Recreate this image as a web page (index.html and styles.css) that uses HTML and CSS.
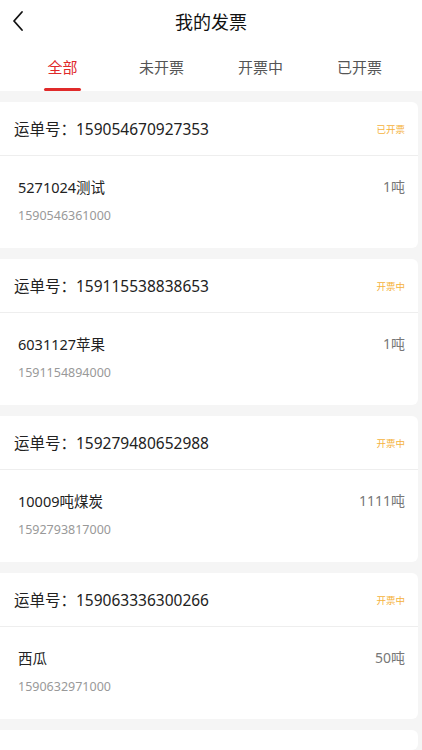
FILE: index.html
```html
<html><head>
<meta charset="utf-8">
<link rel="stylesheet" href="styles.css">
</head><body>
<div class="nav">
  <svg class="back" width="14" height="22" viewBox="0 0 14 22"><path d="M10 2 L2 11 L10 20" fill="none" stroke="#111" stroke-width="1.8" stroke-linecap="round" stroke-linejoin="round"/></svg>
  <div class="title">我的发票</div>
</div>
<div class="tabs">
  <div class="tab active">全部</div>
  <div class="tab">未开票</div>
  <div class="tab">开票中</div>
  <div class="tab">已开票</div>
</div>
<div class="list">
  <div class="card">
    <div class="card-head"><span class="no">运单号：159054670927353</span><span class="status">已开票</span></div>
    <div class="card-body">
      <div class="row"><span class="name">5271024测试</span><span class="weight">1吨</span></div>
      <div class="code">1590546361000</div>
    </div>
  </div>
  <div class="card">
    <div class="card-head"><span class="no">运单号：159115538838653</span><span class="status">开票中</span></div>
    <div class="card-body">
      <div class="row"><span class="name">6031127苹果</span><span class="weight">1吨</span></div>
      <div class="code">1591154894000</div>
    </div>
  </div>
  <div class="card">
    <div class="card-head"><span class="no">运单号：159279480652988</span><span class="status">开票中</span></div>
    <div class="card-body">
      <div class="row"><span class="name">10009吨煤炭</span><span class="weight">1111吨</span></div>
      <div class="code">1592793817000</div>
    </div>
  </div>
  <div class="card">
    <div class="card-head"><span class="no">运单号：159063336300266</span><span class="status">开票中</span></div>
    <div class="card-body">
      <div class="row"><span class="name">西瓜</span><span class="weight">50吨</span></div>
      <div class="code">1590632971000</div>
    </div>
  </div>
  <div class="card last"></div>
</div>
</body></html>
```

FILE: styles.css
```css
body {
    margin: 0;
    font-family: "Noto Sans", "Noto Sans CJK SC", sans-serif;
    background-color: #fff;
    color: #222;
    height: 750px;
    overflow: hidden;
}
.nav {
    height: 44px;
    display: flex;
    align-items: center;
    justify-content: center;
    position: relative;
}
.back {
    position: absolute;
    left: 12px;
    top: 10px;
}
.title {
    font-size: 18px;
    color: #111;
    margin-top: -2px;
}
.tabs {
    display: flex;
    padding: 0 13px;
    height: 47px;
}
.tab {
    flex: 1;
    text-align: center;
    font-size: 15px;
    color: #555;
    padding-top: 12px;
    position: relative;
}
.tab.active {
    color: #e02a2a;
}
.tab.active::after {
    content: "";
    position: absolute;
    left: 31px;
    width: 37px;
    bottom: 0;
    height: 3px;
    border-radius: 2px;
    background-color: #e02a2a;
}
.list {
    background-color: #f5f5f5;
    padding-top: 11px;
    display: flex;
    flex-direction: column;
    gap: 11px;
}
.card {
    background-color: #fff;
    margin-right: 4px;
    border-radius: 0 6px 6px 0;
    height: 146px;
    flex-shrink: 0;
}
.card.last {
    height: 20px;
}
.card-head {
    height: 53px;
    display: flex;
    align-items: center;
    justify-content: space-between;
    padding: 0 13px 0 14px;
    border-bottom: 1px solid #eee;
}
.no {
    font-size: 15.5px;
    color: #222;
}
.status {
    font-size: 9.5px;
    color: #f5b23c;
}
.card-body {
    padding: 20px 13px 0 18px;
}
.row {
    display: flex;
    justify-content: space-between;
    align-items: center;
    height: 20px;
}
.name {
    font-size: 14.5px;
    color: #222;
}
.weight {
    font-size: 14px;
    color: #777;
}
.code {
    font-size: 12.5px;
    color: #999;
    margin-top: 11px;
}
```
